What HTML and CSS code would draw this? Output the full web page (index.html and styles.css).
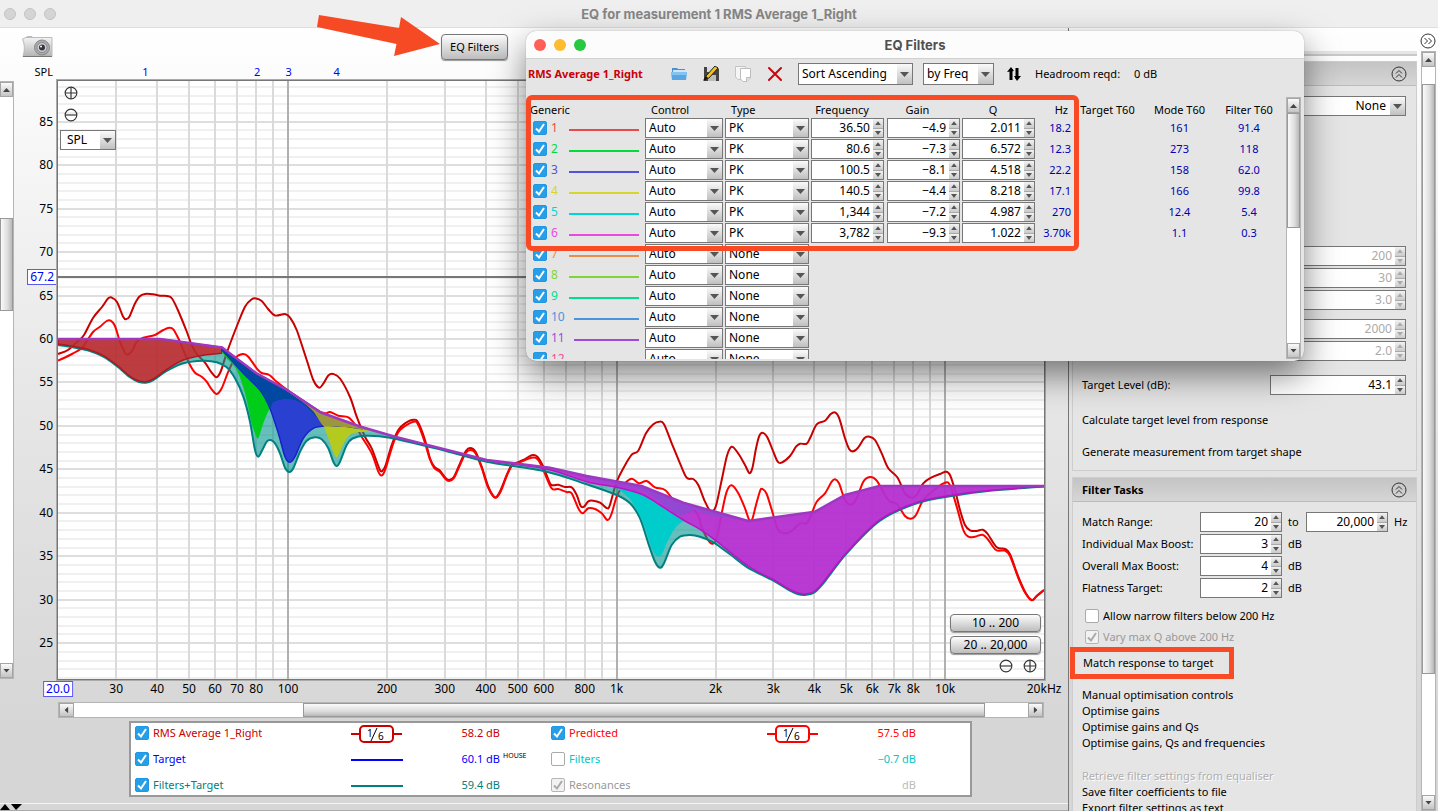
FILE: index.html
```html
<!DOCTYPE html>
<html lang="en">
<head>
<meta charset="UTF-8">
<meta name="viewport" content="width=device-width, initial-scale=1.0">
<title>EQ for measurement 1 RMS Average 1_Right</title>
<link rel="stylesheet" href="styles.css">
</head>
<body>
<header class="titlebar">
    <div class="lights"><i></i><i></i><i></i></div>
    <h1>EQ for measurement 1 RMS Average 1_Right</h1>
</header>

<main class="main">
    <div class="left">
        <div class="left-main">
            <div class="vscroll left-scroll">
                <button class="arrow-btn up" aria-label="Scroll up"></button>
                <div class="track"><div class="thumb"></div></div>
                <button class="arrow-btn down" aria-label="Scroll down"></button>
            </div>

            <section class="graph">
                <div class="graph-toolbar">
                    <svg class="camera" width="31" height="22" viewBox="0 0 31 22">
                        <defs>
                            <linearGradient id="cam" x1="0" y1="0" x2="0" y2="1"><stop offset="0" stop-color="#f4f4f4"/><stop offset="1" stop-color="#b4b4b4"/></linearGradient>
                        </defs>
                        <path d="M5 2V0.500h5V2" fill="#ddd" stroke="#bbb"/>
                        <path d="M0.500 3L4 1.500H30V20.500H1Q4 11 0.500 3Z" fill="url(#cam)" stroke="#bbb"/>
                        <path d="M1 20.500H30" stroke="#777"/>
                        <circle cx="20" cy="11.500" r="7.500" fill="#aaa" stroke="#888"/>
                        <circle cx="20" cy="11.500" r="5" fill="#d0d0d0" stroke="#888"/>
                        <circle cx="20" cy="11.500" r="3" fill="#334"/>
                        <circle cx="19" cy="10.500" r="1" fill="#fff"/>
                    </svg>
                    <button class="eq-btn">EQ Filters</button>
                </div>
                <div class="marker-row">
                    <span class="spl">SPL</span>
                    <div class="markers" id="markers"></div>
                </div>
                <div class="plot-row">
                    <div class="y-axis" id="yAxis"></div>
                    <div class="plot">
                        <svg id="chart" class="chart" viewBox="58 81 986 598" preserveAspectRatio="none"></svg>
                        <div class="zoom-y">
                            <button class="zoom" aria-label="Zoom in"><svg viewBox="0 0 12 12"><circle cx="6" cy="6" r="5"/><path d="M1 6H11M6 1V11"/></svg></button>
                            <button class="zoom" aria-label="Zoom out"><svg viewBox="0 0 12 12"><circle cx="6" cy="6" r="5"/><path d="M1 6H11"/></svg></button>
                            <span class="select spl-select"><select aria-label="Axis"><option>SPL</option></select></span>
                        </div>
                        <div class="zoom-x">
                            <button class="range-btn">10 .. 200</button>
                            <button class="range-btn">20 .. 20,000</button>
                            <div class="zoom-pair">
                                <button class="zoom" aria-label="Zoom out"><svg viewBox="0 0 12 12"><circle cx="6" cy="6" r="5"/><path d="M1 6H11"/></svg></button>
                                <button class="zoom" aria-label="Zoom in"><svg viewBox="0 0 12 12"><circle cx="6" cy="6" r="5"/><path d="M1 6H11M6 1V11"/></svg></button>
                            </div>
                        </div>
                    </div>
                </div>
                <div class="x-axis" id="xAxis"></div>
                <div class="hscroll">
                    <button class="arrow-btn lft" aria-label="Scroll left"></button>
                    <div class="track"><div class="thumb"></div></div>
                    <button class="arrow-btn rgt" aria-label="Scroll right"></button>
                </div>
                <div class="legend">
                    <label class="trace rms"><input type="checkbox" checked> RMS Average 1_Right</label>
                    <svg class="key" viewBox="0 0 52 18"><path d="M0 10H51" stroke="#c80000" stroke-width="2"/><rect x="9" y="2" width="33" height="16" rx="4" fill="#fff" stroke="#c80000" stroke-width="2"/><text x="16" y="13">1</text><path d="M20 17L26 4" stroke="#000"/><text x="27" y="16">6</text></svg>
                    <span class="value rms">58.2 dB</span>
                    <label class="trace predicted"><input type="checkbox" checked> Predicted</label>
                    <svg class="key" viewBox="0 0 52 18"><path d="M0 10H51" stroke="#f00" stroke-width="2"/><rect x="9" y="2" width="33" height="16" rx="4" fill="#fff" stroke="#f00" stroke-width="2"/><text x="16" y="13">1</text><path d="M20 17L26 4" stroke="#000"/><text x="27" y="16">6</text></svg>
                    <span class="value predicted">57.5 dB</span>

                    <label class="trace target"><input type="checkbox" checked> Target</label>
                    <svg class="key" viewBox="0 0 52 18"><path d="M0 10H52" stroke="#00f" stroke-width="2"/></svg>
                    <span class="value target">60.1 dB<small>HOUSE</small></span>
                    <label class="trace filters"><input type="checkbox"> Filters</label>
                    <span></span>
                    <span class="value filters">−0.7 dB</span>

                    <label class="trace sum"><input type="checkbox" checked> Filters+Target</label>
                    <svg class="key" viewBox="0 0 52 18"><path d="M0 10H52" stroke="#008080" stroke-width="2"/></svg>
                    <span class="value sum">59.4 dB</span>
                    <label class="trace resonances"><input type="checkbox" checked disabled> Resonances</label>
                    <span></span>
                    <span class="value resonances">dB</span>
                </div>
            </section>
        </div>
        <footer class="footer"><svg width="24" height="6" viewBox="0 0 24 6"><path d="M0 6L5 0L10 6ZM11 0H22L16 6Z"/></svg></footer>
    </div>

    <aside class="side">
        <button class="expand" aria-label="Hide panel"><svg viewBox="0 0 16 16"><circle cx="8" cy="8" r="7"/><path d="M4.500 5L7.500 8L4.500 11M8.500 5L11.500 8L8.500 11"/></svg></button>
        <div class="side-body">
            <div class="tasks">
                <div class="prev-section"></div>
                <section class="card target-settings">
                    <h2><button class="collapse" aria-label="Collapse"><svg viewBox="0 0 16 16"><circle cx="8" cy="8" r="7"/><path d="M5 7.500L8 4.500L11 7.500M5 11.500L8 8.500L11 11.500"/></svg></button></h2>
                    <div class="card-body">
                        <span class="select wide"><select aria-label="Equaliser"><option>None</option></select></span>
                        <div class="stack">
                            <span class="spin wide off" data-value="200"></span>
                            <span class="spin wide off" data-value="30"></span>
                            <span class="spin wide off" data-value="3.0"></span>
                        </div>
                        <div class="stack">
                            <span class="spin wide off" data-value="2000"></span>
                            <span class="spin wide off" data-value="2.0"></span>
                        </div>
                        <div class="level"><label for="level">Target Level (dB):</label><span class="spin wide" data-value="43.1" data-id="level"></span></div>
                        <button class="task tall">Calculate target level from response</button>
                        <button class="task tall">Generate measurement from target shape</button>
                    </div>
                </section>
                <section class="card">
                    <h2>Filter Tasks <button class="collapse" aria-label="Collapse"><svg viewBox="0 0 16 16"><circle cx="8" cy="8" r="7"/><path d="M5 7.500L8 4.500L11 7.500M5 11.500L8 8.500L11 11.500"/></svg></button></h2>
                    <div class="card-body">
                        <div class="field"><label for="from">Match Range:</label><span class="spin" data-value="20" data-id="from"></span><label for="to" class="unit">to</label><span class="spin" data-value="20,000" data-id="to"></span><span class="unit">Hz</span></div>
                        <div class="field"><label for="ind">Individual Max Boost:</label><span class="spin" data-value="3" data-id="ind"></span><span class="unit">dB</span></div>
                        <div class="field"><label for="overall">Overall Max Boost:</label><span class="spin" data-value="4" data-id="overall"></span><span class="unit">dB</span></div>
                        <div class="field"><label for="flat">Flatness Target:</label><span class="spin" data-value="2" data-id="flat"></span><span class="unit">dB</span></div>
                        <div class="checks">
                            <label><input type="checkbox"> Allow narrow filters below 200 Hz</label>
                            <label class="disabled"><input type="checkbox" checked disabled> Vary max Q above 200 Hz</label>
                        </div>
                        <button class="task match">Match response to target</button>
                        <div class="task-group">
                            <button class="task">Manual optimisation controls</button>
                            <button class="task">Optimise gains</button>
                            <button class="task">Optimise gains and Qs</button>
                            <button class="task">Optimise gains, Qs and frequencies</button>
                        </div>
                        <div class="task-group">
                            <button class="task" disabled>Retrieve filter settings from equaliser</button>
                            <button class="task">Save filter coefficients to file</button>
                            <button class="task">Export filter settings as text</button>
                        </div>
                    </div>
                </section>
            </div>
            <div class="vscroll side-scroll">
                <button class="arrow-btn up" aria-label="Scroll up"></button>
                <div class="track"><div class="thumb"></div></div>
                <button class="arrow-btn down" aria-label="Scroll down"></button>
            </div>
        </div>
    </aside>
</main>

<!-- EQ filters window -->
<div class="dialog">
    <div class="dialog-title">
        <div class="lights"><i></i><i></i><i></i></div>
        <h2>EQ Filters</h2>
    </div>
    <div class="dialog-tools">
        <b class="name">RMS Average 1_Right</b>
        <button class="tool" aria-label="Open"><svg width="18" height="16" viewBox="0 0 18 16"><path d="M2 2H7L8 3H15V8H2Z" fill="#4a90cf"/><path d="M3 4H16V9H3Z" fill="#cfe6f8"/><path d="M1 6H17L16 14H2Z" fill="#58a7e4"/><path d="M1 6H17L16.500 9H1.500Z" fill="#85c3f2"/></svg></button>
        <button class="tool" aria-label="Save"><svg width="18" height="16" viewBox="0 0 18 16"><path d="M2 1H15L17 3V15H2Z" fill="#444"/><path d="M5 1H13V6H5Z" fill="#ddd"/><path d="M6 9H14V15H6Z" fill="#bbb"/><path d="M2 14L4 10L13 0L16 2L7 12Z" fill="#f0c02a" stroke="#222"/><path d="M1 15L4 10L6 12Z" fill="#111"/></svg></button>
        <button class="tool" aria-label="Copy"><svg width="18" height="16" viewBox="0 0 18 16"><path d="M1.500 0.500H11.500V13.500H4L1.500 11Z" fill="#f5f5f5" stroke="#c4c4c4"/><path d="M6.500 2.500H16.500V12L13 15.500H9L6.500 13Z" fill="#fff" stroke="#bdbdbd"/><path d="M16.500 11.500H12.500V15.500" fill="#ddd" stroke="#bdbdbd"/></svg></button>
        <button class="tool" aria-label="Delete"><svg width="18" height="16" viewBox="0 0 18 16"><path d="M3 2L15 14M15 2L3 14" stroke="#c4090f" stroke-width="2" stroke-linecap="round"/></svg></button>
        <span class="select sort"><select aria-label="Sort"><option>Sort Ascending</option></select></span>
        <span class="select by"><select aria-label="Sort by"><option>by Freq</option></select></span>
        <button class="tool swap" aria-label="Swap"><svg width="14" height="14" viewBox="0 0 14 14"><path d="M4 13V2M10 1V12" stroke="#000" stroke-width="3"/><path d="M0 5L4 0L7 4ZM7 9L10 14L14 9Z"/></svg></button>
        <span>Headroom reqd:</span><span class="room">0 dB</span>
    </div>
    <div class="dialog-body">
        <div class="table-wrap">
            <table class="filter-table">
                <colgroup><col class="c-name"><col class="c-control"><col class="c-type"><col class="c-freq"><col class="c-gain"><col class="c-q"><col class="c-hz"><col class="c-target"><col class="c-mode"><col class="c-filter"></colgroup>
                <thead><tr><th class="first">Generic</th><th class="second">Control</th><th class="second">Type</th><th>Frequency</th><th>Gain</th><th>Q</th><th class="hz">Hz</th><th>Target T60</th><th>Mode T60</th><th>Filter T60</th></tr></thead>
                <tbody id="filters"></tbody>
            </table>
        </div>
        <div class="vscroll dialog-scroll">
            <button class="arrow-btn up" aria-label="Scroll up"></button>
            <div class="track"><div class="thumb"></div></div>
            <button class="arrow-btn down" aria-label="Scroll down"></button>
        </div>
    </div>
    <div class="highlight"></div>
</div>

<svg class="pointer" width="124" height="42" viewBox="317 15 124 42"><path d="M319 15L399 28L401 17L440 44L394 56L396.500 44L317 27Z"/></svg>

<script src="script.js"></script>
</body>
</html>
```

FILE: script.js
```js
// number, colour, control type, freq, gain, q, Hz, mode T60, filter T60
const filters = [
    [1, '#e84a4a', 'PK', '36.50', '−4.9', '2.011', '18.2', '161', '91.4'],
    [2, '#00dc3c', 'PK', '80.6', '−7.3', '6.572', '12.3', '273', '118'],
    [3, '#5252dc', 'PK', '100.5', '−8.1', '4.518', '22.2', '158', '62.0'],
    [4, '#d6d62c', 'PK', '140.5', '−4.4', '8.218', '17.1', '166', '99.8'],
    [5, '#00d6d6', 'PK', '1,344', '−7.2', '4.987', '270', '12.4', '5.4'],
    [6, '#e84adc', 'PK', '3,782', '−9.3', '1.022', '3.70k', '1.1', '0.3'],
    [7, '#e8904a', 'None'],
    [8, '#7ed636', 'None'],
    [9, '#00dc90', 'None'],
    [10, '#4a94dc', 'None'],
    [11, '#a04adc', 'None'],
    [12, '#f0509a', 'None']
];

function spin(value, label, id, off) {
    const dis = off ? ' disabled' : '';
    return '<input type="text" value="' + value + '"' + (id ? ' id="' + id + '"' : ' aria-label="' + label + '"') + dis + '>' +
        '<span class="steps"><button aria-label="Up"' + dis + '></button><button aria-label="Down"' + dis + '></button></span>';
}

document.querySelectorAll('.spin').forEach(function (el) {
    el.innerHTML = spin(el.dataset.value, 'Value', el.dataset.id, el.classList.contains('off'));
});

function select(value, label, cls) {
    return '<span class="select ' + cls + '"><select aria-label="' + label + '"><option>' + value + '</option></select></span>';
}

document.getElementById('filters').innerHTML = filters.map(function (f) {
    const cell = (v, label) => v ? '<span class="spin">' + spin(v, label) + '</span>' : '';
    return '<tr><td><label class="filter-name" style="color:' + f[1] + '"><input type="checkbox" checked><span>' + f[0] + '</span><i></i></label></td>' +
        '<td>' + select('Auto', 'Control', 'control') + '</td>' +
        '<td>' + select(f[2], 'Type', 'type') + '</td>' +
        '<td>' + cell(f[3], 'Frequency') + '</td><td>' + cell(f[4], 'Gain') + '</td><td>' + cell(f[5], 'Q') + '</td>' +
        '<td class="num hz">' + (f[6] || '') + '</td><td></td><td class="num">' + (f[7] || '') + '</td><td class="num">' + (f[8] || '') + '</td></tr>';
}).join('');

// chart space: 20 Hz..20 kHz on x, 89.7..20.9 dB on y
const X0 = 58, Y0 = 81, W = 986, H = 598;
const fx = f => 288 + 328.6 * Math.log10(f / 100);
const dy = d => 339 + (60 - d) * 8.69;
const pctX = x => ((x - X0) / W * 100).toFixed(2) + '%';
const pctY = y => ((y - Y0) / H * 100).toFixed(2) + '%';

let out = '';
function line(x1, y1, x2, y2, color, width) {
    out += `<path d="M${x1} ${y1}L${x2} ${y2}" stroke="${color}" stroke-width="${width || 2}"/>`;
}
for (let d = 21; d <= 89; d++) {
    const y = Math.round(dy(d));
    line(X0, y, X0 + W, y, d % 5 ? '#f0f0f0' : '#dedede');
}
[1, 10, 100].forEach(function (dec) {
    for (let i = 2; i <= 10; i++) {
        const f = dec * i * 10;
        if (f >= 20000 || f <= 20) continue;
        const x = Math.round(fx(f));
        line(x, Y0, x, Y0 + H, i === 10 ? '#b0b0b0' : '#dadada');
    }
});
line(X0, 277, X0 + W, 277, '#777');

const parse = s => s.trim().split(/\s+/).map(p => p.split(',').map(Number));
// Catmull-Rom through the points
function smooth(p) {
    let d = '';
    for (let i = 0; i < p.length - 1; i++) {
        const a = p[i - 1] || p[i], b = p[i], c = p[i + 1], e = p[i + 2] || c;
        d += `C${(b[0] + (c[0] - a[0]) / 6).toFixed(1)} ${(b[1] + (c[1] - a[1]) / 6).toFixed(1)} ${(c[0] - (e[0] - b[0]) / 6).toFixed(1)} ${(c[1] - (e[1] - b[1]) / 6).toFixed(1)} ${c[0]} ${c[1]}`;
    }
    return d;
}
const curve = s => { const p = parse(s); return 'M' + p[0] + smooth(p); };
const straight = s => parse(s).map((p, i) => (i ? 'L' : 'M') + p).join('');
// area between an upper polyline and a smooth lower curve, both left to right
function area(upper, lower) {
    const p = parse(lower).reverse();
    return straight(upper) + 'L' + p[0] + smooth(p) + 'Z';
}

const rms = '58,354 68,350 78,341 84,335 93,318 102,307 108,298.5 111.5,297.5 117,302 123,316.5 126,319.3 129.5,316.5 135,303.5 139.5,296.5 145,294 153,294.3 160,295.7 167,296 172,298.5 178.5,311.5 186.7,331.5 191.7,345 196.7,354 205,362.7 211.7,372.7 216.5,377.2 220.7,371.5 226.7,353 236.7,326.5 245,306.7 251.7,299.3 256,298.4 261.7,301 268.3,309.3 275,315.5 285,314 290,317.5 296.7,330 306.7,360 313.3,380 319,387.6 323.3,383.7 328.3,375.5 333.3,374 340,378.5 350,397 356.7,416.7 365,436.7 371.7,448.3 376.7,461.7 380,470 382.3,471 385.7,465 391.7,445 398.3,430 405,423.3 413.3,419.7 418.3,422.7 425,440 430,458.3 434.3,466.7 440,470.7 445,477.3 449,480 454,476.7 460,463.3 466,450.7 470.7,448 475.7,452 481.7,466.7 488.3,486.7 493.3,496 496.7,496.7 500.7,490 506.7,475 511.7,465 516.7,462.7 523.3,460 531.7,455.3 537.3,456.7 543.3,466.7 550,483.3 553.3,485.3 558.3,484.7 565,487 571.7,487.3 576.7,495 580.7,506 584,506.7 588.3,501.3 593.3,500.7 600,502.7 606.7,508 609.3,506.7 612.7,495 616.7,481.7 623.3,468.3 631.7,454.7 638.3,450.7 646,433.3 653.3,424.3 659.3,421.7 664,424.3 671.7,443.3 680,463.3 686.7,477.7 693.3,479 698.3,485 705,501.7 710,510.7 714,510 716.7,503.3 721.7,480 726.7,456.7 730,448.3 733.3,447.3 739.3,455 745,465 749.3,473 752.3,468.3 755.7,450 759,436.7 762.3,432.7 767.3,437.3 773.3,451.7 777.7,461.7 781.7,462.7 790,456 796,446.7 800,443.7 806.7,443.7 810.7,436.7 816.7,424.3 825,420.7 830.7,414 835,412.3 839,417.7 845,438.3 849.3,449.3 853.3,451.3 858.3,447.3 864.3,438.3 869.3,436.7 875,440 881.7,453.3 888.3,468.3 897.3,477.3 905,493.3 911.7,497.7 916.7,495 923.3,483.3 931.7,477.3 940,474 946,471.7 950,475 955,490 960,510 965,525 970,530.3 976.7,531 982.7,529.7 987.7,534 996.7,547.3 1005,549 1010,554.3 1018.3,576.7 1025,591.7 1031.7,600 1036.7,596 1044,590';
const predicted = '58,360.7 70,355 82,348 86.7,341 93.3,331.7 100,326.7 106.7,321 110.7,320.7 115,326 120,341.7 125,352.7 128.3,354.3 132.7,350 136.7,341.7 143.3,337.7 155,335 163.3,330 169.3,327.7 173.3,329.3 178.3,338.3 183.3,350 190,365 195,372.7 201.7,376.7 206.7,381.7 211.7,389.3 216.7,394 221.7,388.3 228.3,371.7 235,358.3 242.7,354 248.3,356.7 256.7,368.3 261.7,373 269.3,375 276.7,381.7 288.3,390.7 300,399 313.3,409 325,413.3 330,412 338.3,415.7 348.3,417.3 355,424.5 361.7,436.7 371.7,453.3 378.3,471.7 382,475.3 385.7,468.3 393.3,443.3 400,430 413.3,421.7 418.3,425 425,443 430,459.500 434.3,468 440,472 445,478.5 449,481 454,478 460,465 466,452.7 470.7,450 475.7,453.5 481.7,468 488.3,488 495.3,497.7 500.7,491.5 506.7,476 511.7,466 516.7,463.7 531.7,457.7 538.3,460 544,471.7 551.7,488.3 558.3,489 566.7,492 571.7,493.3 578.3,508.3 582.7,513.3 588.3,508.3 595,509 601.7,513.3 607.7,520 611.7,513.3 616.7,496.7 623.3,485 631.7,478.7 639,483.3 646.7,481 655,487.3 665,490 673.3,500 681.7,510 686.7,512 693.3,510 698,515 701.7,527 708,540 712.7,543.7 716.7,538 721.7,513.3 726.7,491.7 731.7,485.3 738.3,493.3 745,508.3 749.3,520 752.3,519 756,505 760,491 762.3,489 766.7,494 773.3,515 778.3,530 785,533.3 791.7,531 800,523.3 806.7,523.3 811.7,513.3 816.7,501.7 825,493.3 831.7,481.7 835,479.3 839,483.3 845,500 851,504.7 856.7,498.3 863.3,481.7 870,477 876.7,480.7 888.3,500 896.7,504 905,516 910.7,518.7 916,515 923.3,500 935,489.3 945,482.7 950,485.3 956.7,506.7 963.3,530 968.3,536.7 975,536.7 982.7,534.7 988.3,540 996,550 1005,550.7 1010,556 1018.3,578 1025,592.500 1031.7,600.3 1036.7,596 1044,590';
const target = '58,339 160,339 222,347.5 256,373 287,390 321,412.5 360,426.5 395,436.7 486.7,460 550,467.7 586.7,476 641.7,486 683.3,502.7 748.3,521 815,511.7 845,495 879.3,486 1044,486';
const total = '58,345 73.3,347.3 90,351 103.3,356.7 116.7,366 130,377.3 138.3,381.7 145.7,382.7 153.3,380 166.7,371 183.3,363.3 203.3,360.7 216.7,362.3 226.7,367.3 235,378.3 243.3,396.7 250,421.7 255,450 258.3,456.7 262.3,450 266.7,441.7 270.7,440 275,443.3 280,453.3 285,467.7 289.3,472 293.3,468.3 300,451.7 306.7,440.7 315,437.3 321.7,439.3 328.3,448.3 333.3,461.7 336.7,466 340,461.7 346.7,445 352.5,438.5 365,435.7 390,437.7 445,450.7 486.7,461.7 546.7,471.7 586.7,484.3 616.7,495 630,503.3 640,518.3 648.3,543.3 655,561.7 660,567.7 664,563.3 671.7,545 680,536.7 690,535 700,536.7 713.3,542.3 730,554.3 747.3,567.3 773.3,580.7 790,590.7 798.3,594.3 805,595 814,592.7 823.3,583.3 846.7,553.3 880,520.7 916.7,503.3 953.3,495.7 990,490.7 1044,486.5';
const magentaLow = '486,460.500 546,469 586.7,481.7 616.7,487.3 641.7,494.3 660,505 683.3,520 700,529.3 715,540 748.3,566 773.3,579.5 790,589.5 798.3,593 805,594 814,591.5 823.3,582 846.7,552.5 880,519.7 916.7,502.5 953.3,495 990,490.2 1044,486.5';

const shape = (d, fill, stroke) => { out += `<path d="${d}" fill="${fill}"${stroke ? ` stroke="${stroke}" stroke-width="1.5"` : ''}/>`; };
const trace = (d, color, w) => { out += `<path d="${d}" fill="none" stroke="${color}" stroke-width="${w || 2}"/>`; };

trace(curve(rms), '#c80000');
trace(curve(predicted), '#ff0000');
shape(area(target, total), 'rgba(0,148,142,.6)');
trace(curve(total), '#008080');
shape(area('58,339 160,339 222,347.5', '58,344 73.3,346.3 90,350 103.3,355.7 116.7,365 130,376.3 138.3,380.7 145.7,381.7 153.3,379 166.7,369.5 183.3,360 203.3,355.3 221.7,353.3'), 'rgba(210,28,32,.8)', '#b01820');
shape(area('222,347.5 256,373 287,390', '222,352 226.7,358.3 236.7,370 245,393.3 251.7,423.3 256.7,437.3 259,436.7 263.3,423.3 270,408.3 280,396 287,391'), '#00cc1a');
shape(area('222,347.5 256,373 287,390 321,412.5 360,427', '222,350 243.3,373.3 260,390 269.3,406.7 278.3,433.3 285,456.7 290,462.3 295,456.7 303.3,438.3 313.3,428.3 326.7,426 346.7,427.3 360,429'), '#2a40d0', '#1822c8');
shape(area('222,347.5 256,373 287,390 308,404 323,425', '222,350 243.3,373.3 260,390 269.3,406.7 273,402.5 279,400 288,399 297,401 308,408 323,425'), '#0048a0');
shape(area('287,390 321,412.5 360,426.5 395,436.7', '287,391 300,400 313,411 324,426.5 335,426.500 360,429 395,437'), '#9c963c');
shape(area('324,426.5 345,427 375,431.5', '324,426.5 330,443 335,456 337,457.3 340,451.7 346.7,438.3 355,432.7 375,431.5'), '#b4ca1e');
shape(area('618,482 641.7,492 660,505 683.3,520', '618,489 628,497 635,506.7 643.3,523.3 651.7,548.3 657,556 662,554 666.7,543.3 675,528.3 683.3,520.7'), '#00cccc');
shape(area(target.slice(target.indexOf('486.7')), magentaLow), 'rgba(198,36,214,.86)');
shape(area('586.7,476 641.7,486 683.3,502.7 748.3,521', '586.7,479 616.7,484.3 641.7,490.3 660,502 680,515 695,510 710,515 748.3,521'), 'rgba(140,75,212,.85)');
trace(curve(magentaLow), '#b814c4', 1.5);
trace(straight(target), '#9e38c0', 2.500);

document.getElementById('chart').innerHTML = out;

let labels = '';
for (let d = 25; d <= 85; d += 5) labels += `<span style="top:${pctY(dy(d))}">${d}</span>`;
labels += `<span class="cursor" style="top:${pctY(277)}">67.2</span>`;
document.getElementById('yAxis').innerHTML = labels;

const ticks = { 30: '30', 40: '40', 50: '50', 60: '60', 70: '70', 80: '80', 100: '100', 200: '200', 300: '300', 400: '400', 500: '500', 600: '600', 800: '800', 1000: '1k', 2000: '2k', 3000: '3k', 4000: '4k', 5000: '5k', 6000: '6k', 7000: '7k', 8000: '8k', 10000: '10k', 20000: '20kHz' };
document.getElementById('xAxis').innerHTML = '<span class="cursor" style="left:0">20.0</span>' +
    Object.keys(ticks).map(f => `<span style="left:${pctX(fx(f))}">${ticks[f]}</span>`).join('');

document.getElementById('markers').innerHTML = [36.8, 80.6, 100.5, 140.5]
    .map((f, i) => `<span style="left:${pctX(fx(f))}">${i + 1}</span>`).join('');
```

FILE: styles.css
```css
* {
    box-sizing: border-box;
}

body {
    margin: 0;
    height: 100vh;
    overflow: hidden;
    display: flex;
    flex-direction: column;
    position: relative;
    font: 11px/16px "Noto Sans", sans-serif;
    color: #000;
    background: linear-gradient(#fff 27px, #e6e6e6 50%, #d6d6d6 90%);
}

button, input, select {
    font: inherit;
    color: inherit;
    margin: 0;
    padding: 0;
}

h1, h2 {
    margin: 0;
    font-size: 12px;
}

/* window title */
.titlebar {
    height: 28px;
    flex: none;
    background: #efefef;
    border-bottom: 1px solid #dedede;
    display: flex;
    align-items: center;
    justify-content: center;
    position: relative;
}

.titlebar h1 {
    font: 700 13px/16px Inter, sans-serif;
    color: #868686;
}

.lights {
    position: absolute;
    left: 4px;
    display: flex;
    gap: 8px;
}

.lights i {
    width: 12px;
    height: 12px;
    border-radius: 50%;
    background: #d4d4d4;
    border: 1px solid #c4c4c4;
}

.main {
    flex: 1;
    min-height: 0;
    display: flex;
}

.left {
    flex: 1;
    min-width: 0;
    display: flex;
    flex-direction: column;
}

.left-main {
    flex: 1;
    min-height: 0;
    display: flex;
}

/* scrollbars */
.vscroll, .hscroll {
    display: flex;
    flex: none;
    background: #fff;
    border: 1px solid #b5b5b5;
}

.vscroll {
    flex-direction: column;
    width: 15px;
}

.arrow-btn {
    flex: none;
    width: 15px;
    height: 15px;
    border: 1px solid #a5a5a5;
    background: linear-gradient(#fafafa, #c4c4c4);
    display: flex;
    align-items: center;
    justify-content: center;
}

.vscroll .arrow-btn {
    width: 100%;
}

.hscroll .arrow-btn {
    height: 100%;
}

.arrow-btn::before {
    content: "";
    width: 7px;
    height: 4px;
    background: #444;
    clip-path: polygon(0 0, 100% 0, 50% 100%);
}

.arrow-btn.up::before {
    transform: rotate(180deg);
}

.arrow-btn.lft::before {
    transform: rotate(90deg);
}

.arrow-btn.rgt::before {
    transform: rotate(-90deg);
}

.track {
    flex: 1;
    display: flex;
    flex-direction: inherit;
}

.vscroll .thumb {
    border: 1px solid #999;
    background: linear-gradient(90deg, #fafafa, #ddd 60%, #b8b8b8);
    width: 100%;
}

.hscroll .thumb {
    border: 1px solid #999;
    background: linear-gradient(#fafafa, #ddd 60%, #b8b8b8);
}

.left-scroll {
    width: 14px;
    margin: 53px 0 124px;
    border-left: 0;
}

.left-scroll .track {
    padding-top: 121px;
}

.left-scroll .thumb {
    height: 21%;
}

/* graph */
.graph {
    flex: 1;
    min-width: 0;
    display: flex;
    flex-direction: column;
}

.graph-toolbar {
    height: 36px;
    flex: none;
    display: flex;
    align-items: flex-start;
    padding: 6px 0 0 8px;
    gap: 388px;
}

.camera {
    margin-top: 2px;
}

.eq-btn, .range-btn {
    border: 1px solid #777;
    border-radius: 4px;
    background: linear-gradient(#fdfdfd, #bdbdbd);
    box-shadow: 0 1px 1px #999;
}

.eq-btn {
    width: 67px;
    height: 26px;
}

.marker-row {
    display: flex;
    height: 17px;
    flex: none;
    padding-right: 24px;
}

.spl {
    width: 44px;
    padding-right: 5px;
    text-align: right;
}

.markers {
    flex: 1;
    position: relative;
    color: #00f;
}

.markers span, .x-axis span {
    position: absolute;
    transform: translateX(-50%);
}

.plot-row {
    flex: 1;
    min-height: 0;
    display: flex;
    padding-right: 24px;
    font-size: 12px;
}

.y-axis {
    width: 44px;
    position: relative;
}

.y-axis span {
    position: absolute;
    right: 5px;
    transform: translateY(-50%);
}

.y-axis .cursor {
    right: 1px;
}

.cursor {
    color: #00f;
    border: 1px solid #5a5af0;
    background: #fff;
    padding: 0 2px;
    line-height: 14px;
}

.plot {
    flex: 1;
    min-width: 0;
    position: relative;
    background: #fff;
    outline: 1px solid #777;
    box-shadow: 0 0 0 2px #aaa;
}

.chart {
    display: block;
    width: 100%;
    height: 100%;
}

.zoom-y {
    position: absolute;
    left: 2px;
    top: 5px;
    display: flex;
    flex-direction: column;
    gap: 8px;
}

.zoom {
    width: 14px;
    height: 14px;
    border: 0;
    background: none;
    margin-left: 4px;
}

.zoom svg, .collapse svg, .expand svg {
    display: block;
    width: 100%;
    height: 100%;
    fill: none;
    stroke: #333;
    overflow: visible;
}

.spl-select {
    width: 56px;
    height: 20px;
}

.zoom-x {
    position: absolute;
    right: 3px;
    bottom: 6px;
    display: flex;
    flex-direction: column;
    gap: 4px;
}

.range-btn {
    width: 91px;
    height: 18px;
    line-height: 14px;
}

.zoom-pair {
    display: flex;
    gap: 6px;
    justify-content: flex-end;
    padding: 1px 4px 0 0;
}

.x-axis {
    height: 23px;
    flex: none;
    margin: 0 24px 0 44px;
    position: relative;
    font-size: 12px;
}

.x-axis span {
    top: 2px;
}

.hscroll {
    height: 16px;
    margin: 0 24px 0 44px;
}

.hscroll .track {
    padding-left: 229px;
}

.hscroll .thumb {
    width: 94%;
    margin-right: 40px;
}

.legend {
    flex: none;
    width: 843px;
    height: 76px;
    margin: 3px auto 6px 115px;
    padding: 0 0 0 4px;
    border: 2px solid #999;
    background: #fff;
    display: grid;
    grid-template-columns: 205px 82px 129px 205px 82px 129px;
    grid-auto-rows: 26px;
    align-items: center;
    align-content: center;
}

.trace {
    display: flex;
    align-items: center;
    gap: 4px;
}

.key {
    width: 52px;
    height: 18px;
    margin-left: 11px;
    overflow: visible;
}

.key text {
    font-size: 10px;
}

.value {
    width: 78px;
    justify-self: start;
    text-align: right;
    position: relative;
}

.value small {
    position: absolute;
    left: 81px;
    top: -2px;
    font-size: 7px;
    line-height: 14px;
    color: #000;
}

.rms { color: #c80000; }
.predicted { color: #f00; }
.target { color: #00f; }
.filters { color: #00c8c8; }
.sum { color: #008080; }
.resonances { color: #999; }
.value.resonances { color: #bbb; }

input[type="checkbox"] {
    appearance: none;
    flex: none;
    width: 14px;
    height: 14px;
    border: 1px solid #aaa;
    border-radius: 2px;
    background: #fff;
}

input[type="checkbox"]:checked {
    border-color: #2196e3;
    background: #269ee8 url("data:image/svg+xml,%3Csvg xmlns='http://www.w3.org/2000/svg' viewBox='0 0 12 12'%3E%3Cpath d='M2 6.500L5 9.500L10 2' fill='none' stroke='white' stroke-width='2'/%3E%3C/svg%3E");
}

input[type="checkbox"]:disabled {
    border-color: #b5b5b5;
    background: #f2f2f2 url("data:image/svg+xml,%3Csvg xmlns='http://www.w3.org/2000/svg' viewBox='0 0 12 12'%3E%3Cpath d='M2 6.500L5 9.500L10 2' fill='none' stroke='%23aaa' stroke-width='2'/%3E%3C/svg%3E");
}

/* drop-downs and spinners */
.select {
    display: block;
    position: relative;
}

.select select {
    appearance: none;
    display: block;
    width: 100%;
    height: 100%;
    border: 1px solid #777;
    border-radius: 0;
    padding: 0 0 0 6px;
    background: linear-gradient(#fafafa, #c0c0c0) right / 15px 100% no-repeat #fff;
    color: #000;
    font-size: 12px;
}

.select::after {
    content: "";
    position: absolute;
    right: 4px;
    top: 50%;
    margin-top: -2px;
    width: 9px;
    height: 5px;
    background: #555;
    clip-path: polygon(0 0, 100% 0, 50% 100%);
    pointer-events: none;
}

.spin {
    display: flex;
    flex: none;
    width: 82px;
    height: 20px;
    border: 1px solid #777;
    background: #fff;
}

.spin input {
    flex: 1;
    min-width: 0;
    border: 0;
    padding-right: 3px;
    background: none;
    text-align: right;
    font-size: 12px;
}

.steps {
    width: 10px;
    display: flex;
    flex-direction: column;
    gap: 1px;
    background: #aaa;
}

.steps button {
    flex: 1;
    min-height: 0;
    border: 0;
    background: linear-gradient(#f2f2f2, #cacaca);
    display: flex;
    align-items: center;
    justify-content: center;
}

.steps button::before {
    content: "";
    width: 6px;
    height: 4px;
    background: #555;
    clip-path: polygon(50% 0, 100% 100%, 0 100%);
}

.steps button:last-child::before {
    transform: rotate(180deg);
}

.off {
    color: #aaa;
}

.off .steps button::before {
    background: #aaa;
}

/* right hand panel */
.side {
    width: 370px;
    flex: none;
    border-left: 1px solid #777;
    display: flex;
    flex-direction: column;
    overflow: hidden;
}

.expand {
    align-self: flex-end;
    flex: none;
    width: 16px;
    height: 23px;
    margin-right: 2px;
    padding-top: 3px;
    border: 0;
    background: none;
}

.expand svg {
    height: 16px;
}

.side-body {
    flex: 1;
    min-height: 0;
    display: flex;
    justify-content: space-between;
    padding: 0 2px 0 1px;
}

.tasks {
    width: 347px;
    padding-left: 2px;
    overflow: hidden;
}

.prev-section {
    height: 5px;
    margin-bottom: 5px;
    background: #e5e5e5;
    border-bottom: 2px solid #c8c8c8;
}

.card {
    border: 1px solid #cdcdcd;
    background: #e5e5e5;
    margin-bottom: 6px;
}

.card h2 {
    display: flex;
    align-items: center;
    height: 24px;
    padding: 0 9px;
    background: linear-gradient(#c4c4c4, #d6d6d6);
    border-bottom: 1px solid #bbb;
    font-size: 11px;
}

.collapse {
    width: 16px;
    height: 16px;
    margin-left: auto;
    border: 0;
    background: none;
}

.card-body {
    padding: 10px 4px 0 9px;
}

.target-settings {
    height: 410px;
}

.target-settings .card-body {
    padding-right: 10px;
}

.wide {
    width: 136px;
    height: 20px;
    margin-left: auto;
}

.select.wide {
    margin-bottom: 130px;
}

.select.wide select {
    text-align-last: right;
    padding-right: 19px;
}

.stack {
    display: flex;
    flex-direction: column;
    gap: 2px;
    margin-bottom: 9px;
}

.level {
    display: flex;
    align-items: center;
    margin: 14px 0 9px;
}

.task {
    display: block;
    height: 16px;
    border: 0;
    background: none;
    white-space: nowrap;
}

.task:disabled {
    color: #b0b0b0;
    text-shadow: 1px 1px #fff;
}

.task.tall {
    height: 32px;
}

.field {
    display: flex;
    align-items: center;
    height: 20px;
    margin-bottom: 2px;
}

.field label:first-child {
    flex: none;
    width: 118px;
    white-space: nowrap;
}

.field .unit {
    flex: none;
    width: 24px;
    padding-left: 6px;
}

.checks {
    padding: 5px 0 0 3px;
}

.checks label {
    display: flex;
    align-items: center;
    gap: 4px;
    height: 21px;
}

.checks .disabled {
    color: #999;
}

.match {
    height: 22px;
    margin: 5px 0 13px -7px;
    padding: 0 16px 0 8px;
    outline: 5px solid #f84a24;
}

.task-group {
    margin-bottom: 17px;
}

.side-scroll .track {
    padding-top: 17px;
}

.side-scroll .thumb {
    height: 83%;
}

.footer {
    height: 8px;
    flex: none;
    border-top: 1px solid #f4f4f4;
    border-bottom: 1px solid #aaa;
    line-height: 0;
}

/* EQ filters window */
.dialog {
    position: absolute;
    left: 526px;
    top: 31px;
    width: 778px;
    height: 330px;
    display: flex;
    flex-direction: column;
    background: #e5e5e5;
    border-radius: 10px;
    box-shadow: 0 0 1px #777, 0 14px 34px rgba(0, 0, 0, .5);
}

.dialog-title {
    height: 28px;
    flex: none;
    display: flex;
    align-items: center;
    justify-content: center;
    position: relative;
    border-radius: 10px 10px 0 0;
    background: #fcfcfc;
    border-bottom: 1px solid #d0d0d0;
}

.dialog-title h2 {
    font: 700 13px/16px Inter, sans-serif;
    color: #505050;
}

.dialog-title .lights {
    left: 8px;
}

.dialog-title .lights i {
    background: #ff5f57;
    border: 0;
}

.dialog-title .lights i:nth-child(2) {
    background: #febc2e;
}

.dialog-title .lights i:nth-child(3) {
    background: #28c840;
}

.dialog-tools {
    height: 30px;
    flex: none;
    display: flex;
    align-items: center;
    padding-left: 2px;
}

.dialog-tools .name {
    width: 142px;
    color: #c8000a;
}

.tool {
    width: 32px;
    height: 22px;
    flex: none;
    padding-right: 14px;
    border: 0;
    background: none;
}

.tool svg {
    display: block;
}

.sort {
    width: 115px;
    height: 22px;
    margin-right: 10px;
}

.by {
    width: 71px;
    height: 22px;
    margin-right: 13px;
}

.tool.swap {
    width: 28px;
}

.room {
    margin-left: 14px;
}

.sort select, .by select {
    padding-left: 3px;
}

.dialog-body {
    flex: 1;
    min-height: 0;
    display: flex;
    justify-content: space-between;
    padding: 8px 3px 2px 0;
}

.table-wrap {
    overflow: hidden;
}

.filter-table {
    width: 757px;
    table-layout: fixed;
    border-collapse: collapse;
}

.c-name { width: 119px; }
.c-control { width: 80px; }
.c-type { width: 86px; }
.c-freq { width: 76px; }
.c-gain { width: 75px; }
.c-q { width: 76px; }
.c-hz { width: 33px; }
.c-target { width: 73px; }
.c-mode { width: 71px; }
.c-filter { width: 68px; }

.filter-table th, .filter-table td {
    height: 21px;
    padding: 0;
    font-weight: normal;
    vertical-align: top;
}

.filter-table th {
    padding: 5px 14px 0 0;
    white-space: nowrap;
}

.filter-table th.first {
    text-align: left;
    padding-left: 4px;
}

.filter-table th.second {
    text-align: left;
    padding-left: 6px;
}

.filter-table th.hz {
    text-align: right;
    padding-right: 3px;
}

.filter-table .hz ~ th {
    padding-right: 0;
}

.filter-table .num {
    text-align: center;
    line-height: 20px;
    color: #0000b4;
}

.filter-table td.hz {
    text-align: right;
}

.filter-name {
    display: flex;
    align-items: center;
    height: 20px;
    padding: 0 6px 0 7px;
    font-size: 12px;
}

.filter-name span {
    min-width: 18px;
    padding: 0 5px 0 4px;
}

.filter-name i {
    flex: 1;
    margin: 3px 0 0 4px;
    height: 2px;
    background: currentColor;
}

.control {
    width: 78px;
    height: 20px;
}

.type {
    width: 84px;
    height: 20px;
}

.control select, .type select {
    padding-left: 3px;
}

.filter-table .spin {
    width: 73px;
}

.dialog-scroll .thumb {
    height: 50%;
}

/* callouts */
.highlight {
    position: absolute;
    left: 0;
    top: 64px;
    width: 553px;
    height: 156px;
    border: 5px solid #f84a24;
    border-radius: 6px;
    pointer-events: none;
}

.pointer {
    position: absolute;
    left: 317px;
    top: 15px;
    fill: #f64a24;
}
```
